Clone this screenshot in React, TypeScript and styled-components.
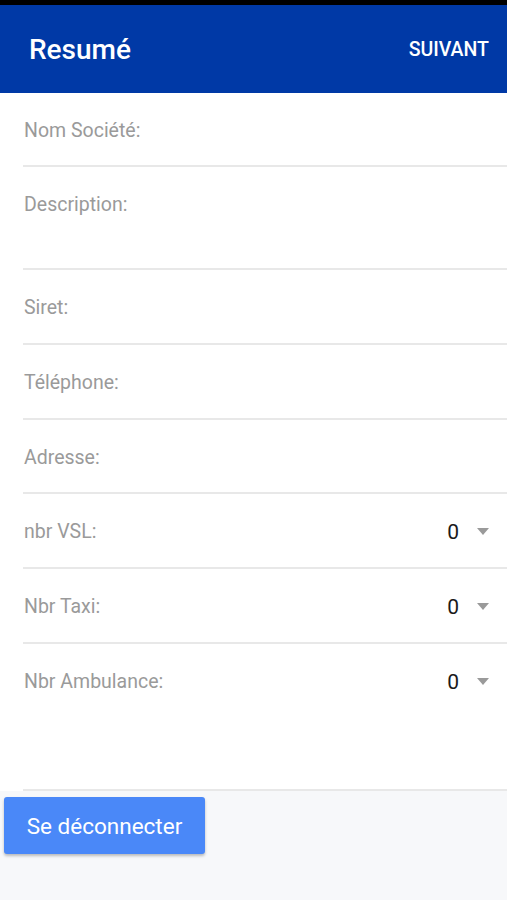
import React from "react";
import styled, { createGlobalStyle } from "styled-components";

const Global = createGlobalStyle`
  html, body { margin: 0; padding: 0; background: #f7f8fa; }
  body { font-family: Roboto, "Noto Sans", sans-serif; }
  * { box-sizing: border-box; }
`;

const Page = styled.div`
  width: 507px;
  min-height: 900px;
  background: #f7f8fa;
  display: flex;
  flex-direction: column;
`;

const StatusBar = styled.div`
  height: 5px;
  background: #000;
`;

const Header = styled.header`
  height: 88px;
  background: #0039a6;
  display: flex;
  align-items: center;
  justify-content: space-between;
  padding: 0 18px 0 29px;
  color: #fff;
`;

const Title = styled.h1`
  margin: 0;
  font-size: 28px;
  font-weight: 500;
  letter-spacing: 0;
`;

const NextButton = styled.span`
  font-size: 19.5px;
  font-weight: 500;
`;

const Form = styled.div`
  background: #fff;
  padding-left: 23px;
`;

const Row = styled.div<{ $h: number }>`
  height: ${(p) => p.$h}px;
  border-bottom: 2px solid #e8e8e8;
  display: flex;
  align-items: flex-start;
  justify-content: space-between;
  padding: 26px 18px 0 1px;
`;

const Label = styled.span`
  font-size: 19.5px;
  line-height: 24px;
  color: #9a9a9a;
`;

const Picker = styled.div`
  display: flex;
  align-items: center;
  gap: 18px;
  height: 24px;
`;

const Value = styled.span`
  font-size: 21px;
  color: #1a1a1a;
  line-height: 24px;
`;

const Caret = styled.span`
  width: 0;
  height: 0;
  border-left: 6.5px solid transparent;
  border-right: 6.5px solid transparent;
  border-top: 7px solid #9a9a9a;
  margin-top: -2px;
`;

const Footer = styled.div`
  padding: 6px 4px;
`;

const LogoutButton = styled.button`
  width: 201px;
  height: 57px;
  border: none;
  border-radius: 3px;
  background: #4a88f8;
  color: #fff;
  font-family: Roboto, sans-serif;
  font-size: 22.5px;
  box-shadow: 0 2px 3px rgba(0, 0, 0, 0.25);
  padding: 0;
`;

const fields: { label: string; h: number; picker?: boolean }[] = [
  { label: "Nom Société:", h: 74 },
  { label: "Description:", h: 103 },
  { label: "Siret:", h: 75 },
  { label: "Téléphone:", h: 75 },
  { label: "Adresse:", h: 74 },
  { label: "nbr VSL:", h: 75, picker: true },
  { label: "Nbr Taxi:", h: 75, picker: true },
  { label: "Nbr Ambulance:", h: 147, picker: true },
];

export default function App() {
  return (
    <Page>
      <Global />
      <StatusBar />
      <Header>
        <Title>Resumé</Title>
        <NextButton>SUIVANT</NextButton>
      </Header>
      <Form>
        {fields.map((f) => (
          <Row key={f.label} $h={f.h}>
            <Label>{f.label}</Label>
            {f.picker && (
              <Picker>
                <Value>0</Value>
                <Caret />
              </Picker>
            )}
          </Row>
        ))}
      </Form>
      <Footer>
        <LogoutButton>Se déconnecter</LogoutButton>
      </Footer>
    </Page>
  );
}
